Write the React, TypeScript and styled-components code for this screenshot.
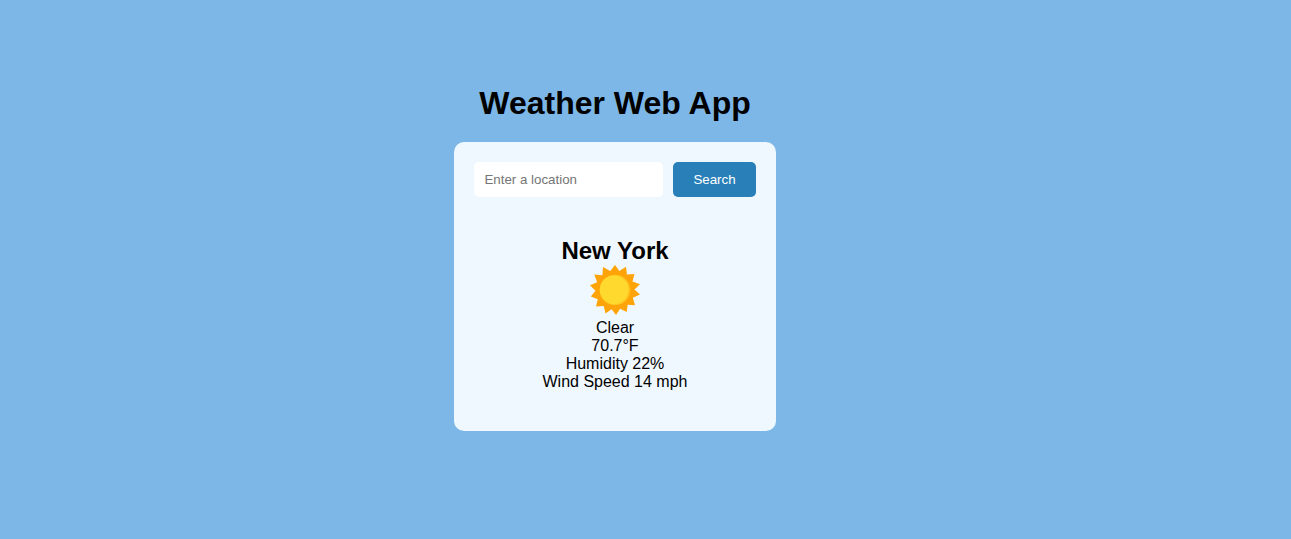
import React from "react";
import styled, { createGlobalStyle } from "styled-components";

const GlobalStyle = createGlobalStyle`
  * { box-sizing: border-box; }
  body {
    margin: 0;
    background: #7cb7e8;
    color: #000;
    font-family: Arial, "Liberation Sans", sans-serif;
    font-size: 16px;
  }
`;

const Page = styled.main`
  display: flex;
  flex-direction: column;
  align-items: center;
  min-height: 100vh;
  padding: 85px 61px 85px 0;
`;

const Title = styled.h1`
  margin: 0 0 20px;
  font-size: 32px;
  line-height: 37px;
`;

const Card = styled.section`
  padding: 20px;
  border-radius: 10px;
  background: #f0f8ff;
`;

const SearchForm = styled.form`
  display: flex;
  gap: 10px;
`;

const LocationInput = styled.input`
  width: 189px;
  padding: 10px;
  border: 0;
  border-radius: 5px;
  background: #fff;
  font-family: inherit;
`;

const SearchButton = styled.button`
  padding: 10px 20px;
  border: 0;
  border-radius: 5px;
  background: #2980b9;
  color: #fff;
  font-family: inherit;
  cursor: pointer;
`;

const Report = styled.div`
  display: flex;
  flex-direction: column;
  align-items: center;
  padding: 40px 0 20px;
  line-height: 18px;
`;

const City = styled.h2`
  margin: 0;
  font-size: 24px;
  line-height: 28px;
`;

const SunIcon = styled.svg`
  width: 50px;
  height: 50px;
  margin-bottom: 4px;
`;

const Reading = styled.p`
  margin: 0;
`;

const rayTips = [
  [25, 0], [36, 1.8], [44.5, 9], [50, 19.3], [50, 29.5], [45, 40.2], [36.7, 46.9],
  [26, 50], [15.5, 48.6], [6, 41.6], [0.8, 31.5], [0, 20.3], [4.3, 9.6], [13, 2],
];

const valleyRadius = 19.5;

const rays = rayTips
  .map(([x, y], i) => {
    const [nextX, nextY] = rayTips[(i + 1) % rayTips.length];
    const angle = Math.atan2((y + nextY) / 2 - 25, (x + nextX) / 2 - 25);
    const valleyX = 25 + valleyRadius * Math.cos(angle);
    const valleyY = 25 + valleyRadius * Math.sin(angle);
    return `${x},${y} ${valleyX},${valleyY}`;
  })
  .join(" ");

const readings = ["Clear", "70.7°F", "Humidity 22%", "Wind Speed 14 mph"];

export default function App() {
  return (
    <>
      <GlobalStyle />
      <Page>
        <Title>Weather Web App</Title>
        <Card>
          <SearchForm onSubmit={(event) => event.preventDefault()}>
            <LocationInput type="text" aria-label="Location" placeholder="Enter a location" />
            <SearchButton type="submit">Search</SearchButton>
          </SearchForm>
          <Report>
            <City>New York</City>
            <SunIcon viewBox="0 0 50 50" role="img" aria-label="Sunny">
              <polygon points={rays} fill="#ffa408" />
              <circle cx="25" cy="25" r="15.3" fill="#fdc21e" />
              <circle cx="24.2" cy="24.8" r="14.4" fill="#ffd92e" />
            </SunIcon>
            {readings.map((reading) => (
              <Reading key={reading}>{reading}</Reading>
            ))}
          </Report>
        </Card>
      </Page>
    </>
  );
}
